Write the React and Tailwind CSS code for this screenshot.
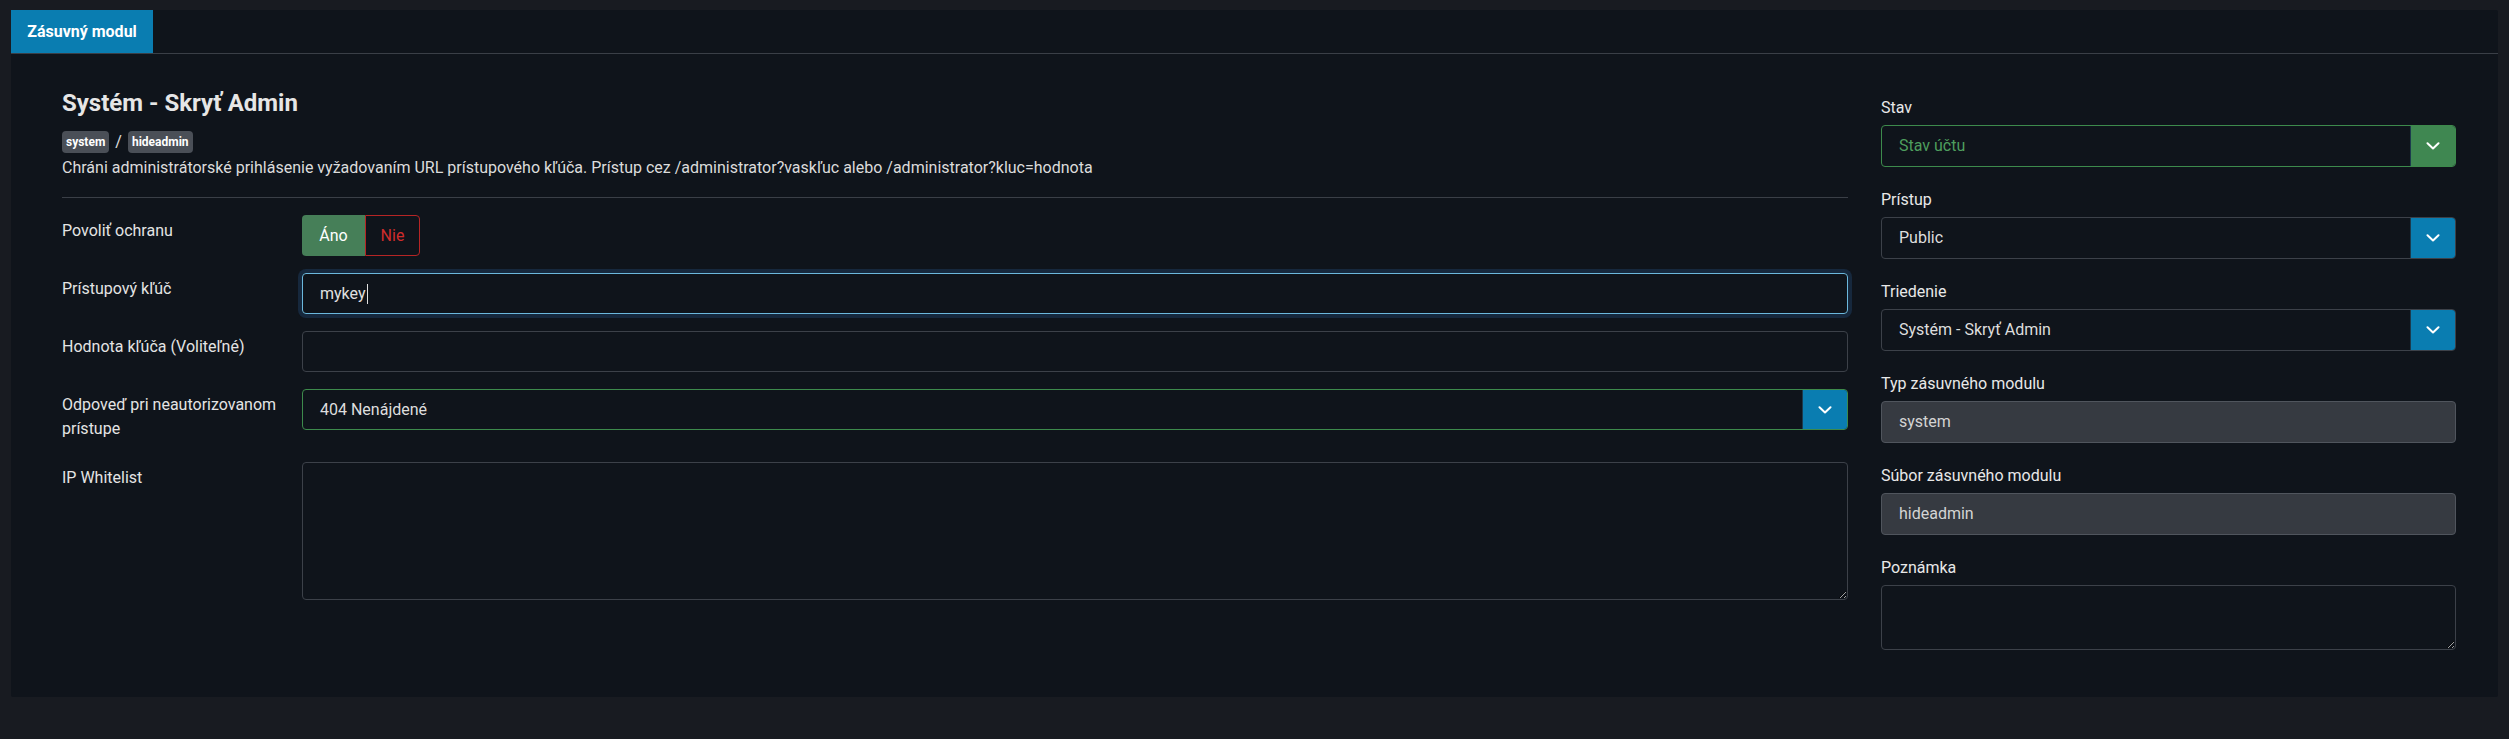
import React from "react";

const Chevron = () => (
  <svg width="14" height="8" viewBox="0 0 14 8" fill="none">
    <path
      d="M1.5 1.2l5.5 5.3 5.5-5.3"
      stroke="white"
      strokeWidth="2"
      strokeLinecap="round"
      strokeLinejoin="round"
    />
  </svg>
);

const Select = ({ value, tone = "default", height = "h-[41px]" }) => {
  const border =
    tone === "green" || tone === "greenBtn" ? "border-[#3d8a4c]" : "border-[#3c4149]";
  const btn = tone === "greenBtn" ? "bg-[#3f8751]" : "bg-[#0a7db1]";
  const txt = tone === "greenBtn" ? "text-[#4e9e5e]" : "text-[#dedede]";
  return (
    <div className={`flex ${height} border ${border} rounded-[4px] overflow-hidden`}>
      <div className={`flex-1 flex items-center px-[17px] text-[16px] ${txt}`}>{value}</div>
      <div className={`w-[45px] ${btn} border-l border-[#1c3b4e] flex items-center justify-center`}>
        <Chevron />
      </div>
    </div>
  );
};

const Row = ({ label, children, className = "mb-[17px]" }) => (
  <div className={`flex items-start ${className}`}>
    <div className="w-[240px] pt-[4px] pr-4 text-[16px] leading-[24px] text-[#e4e4e4]">
      {label}
    </div>
    <div className="flex-1">{children}</div>
  </div>
);

const Field = ({ label, children }) => (
  <div className="mb-[21px]">
    <div className="text-[16px] leading-[24px] text-[#e8e8e8] mb-[5px]">{label}</div>
    {children}
  </div>
);

export default function App() {
  return (
    <div
      className="min-h-[739px] bg-[#181b21] pt-[10px] pl-[11px] pr-[11px]"
      style={{ fontFamily: "Roboto, 'Noto Sans', sans-serif" }}
    >
      <div className="bg-[#0f141b] rounded-[2px]">
        <div className="flex border-b border-[#3a3f47]">
          <div className="w-[142px] h-[43px] bg-[#0a7db1] flex items-center justify-center text-white font-bold text-[16px]">
            Zásuvný modul
          </div>
        </div>

        <div className="flex items-start pl-[51px] pr-[42px] pt-[35px] pb-[26px] gap-[33px]">
          {/* left column */}
          <div className="flex-1">
            <h1 className="text-[24px] leading-[28px] font-bold text-[#e6e6e6]">
              Systém - Skryť Admin
            </h1>
            <div className="flex items-center mt-[13px] text-[#e0e0e0]">
              <span className="h-[22px] px-[4px] rounded-[4px] bg-[#4a4f57] text-white text-[12px] font-bold flex items-center">
                system
              </span>
              <span className="mx-[6px] text-[16px]">/</span>
              <span className="h-[22px] px-[4px] rounded-[4px] bg-[#4a4f57] text-white text-[12px] font-bold flex items-center">
                hideadmin
              </span>
            </div>
            <p className="mt-[2px] text-[16px] leading-[24px] text-[#dcdcdc]">
              Chráni administrátorské prihlásenie vyžadovaním URL prístupového kľúča. Prístup cez /administrator?vaskľuc alebo /administrator?kluc=hodnota
            </p>
            <div className="mt-[17px] mb-[17px] border-t border-[#3a3f47]" />

            <Row label="Povoliť ochranu">
              <div className="flex h-[41px] w-[118px]">
                <div className="w-[63px] bg-[#467f58] rounded-l-[4px] flex items-center justify-center text-white text-[16px]">
                  Áno
                </div>
                <div className="flex-1 border border-[#b62525] rounded-r-[4px] flex items-center justify-center text-[#d02c2c] text-[16px]">
                  Nie
                </div>
              </div>
            </Row>

            <Row label="Prístupový kľúč">
              <div className="h-[41px] border border-[#6bb8dd] rounded-[4px] shadow-[0_0_0_4px_#16283d] flex items-center px-[17px] text-[16px] text-[#e0e0e0]">
                mykey
                <span className="inline-block w-[1px] h-[20px] bg-[#e0e0e0] ml-[1px]" />
              </div>
            </Row>

            <Row label="Hodnota kľúča (Voliteľné)">
              <div className="h-[41px] border border-[#3c4149] rounded-[4px]" />
            </Row>

            <Row label="Odpoveď pri neautorizovanom prístupe" className="mb-[21px]">
              <Select value="404 Nenájdené" tone="green" />
            </Row>

            <Row label="IP Whitelist" className="">
              <textarea
                className="block w-full h-[138px] bg-transparent border border-[#3c4149] rounded-[4px] outline-none"
                style={{ colorScheme: "dark" }}
              />
            </Row>
          </div>

          {/* right column */}
          <div className="w-[575px] mt-[7px]">
            <Field label="Stav">
              <Select value="Stav účtu" tone="greenBtn" height="h-[42px]" />
            </Field>
            <Field label="Prístup">
              <Select value="Public" height="h-[42px]" />
            </Field>
            <Field label="Triedenie">
              <Select value="Systém - Skryť Admin" height="h-[42px]" />
            </Field>
            <Field label="Typ zásuvného modulu">
              <div className="h-[42px] bg-[#363a41] border border-[#50555d] rounded-[4px] flex items-center px-[17px] text-[16px] text-[#d4d4d4]">
                system
              </div>
            </Field>
            <Field label="Súbor zásuvného modulu">
              <div className="h-[42px] bg-[#363a41] border border-[#50555d] rounded-[4px] flex items-center px-[17px] text-[16px] text-[#d4d4d4]">
                hideadmin
              </div>
            </Field>
            <Field label="Poznámka">
              <textarea
                className="block w-full h-[65px] bg-transparent border border-[#3c4149] rounded-[4px] outline-none"
                style={{ colorScheme: "dark" }}
              />
            </Field>
          </div>
        </div>
      </div>
    </div>
  );
}
